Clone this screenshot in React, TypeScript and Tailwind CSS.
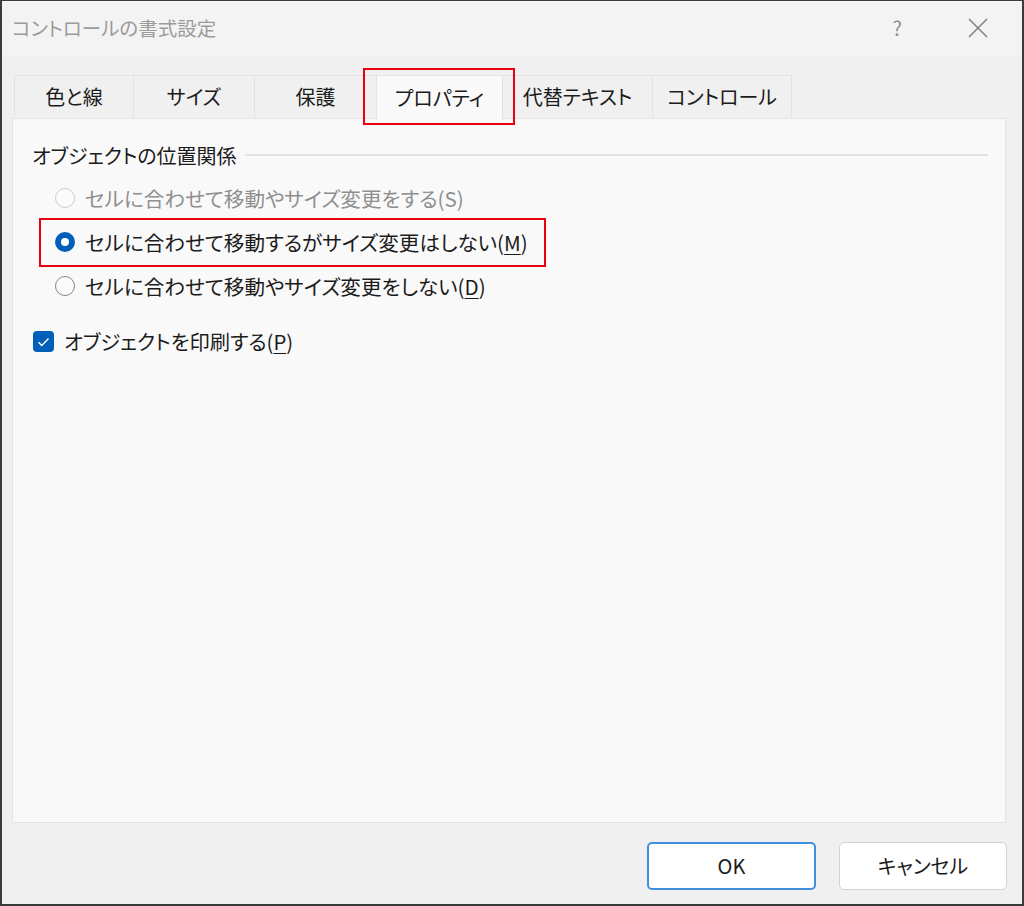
import React from "react";

const font = "font-['Noto_Sans_CJK_JP','Noto_Sans',sans-serif] [font-feature-settings:'palt']";

const tabs = ["色と線", "サイズ", "保護", "プロパティ", "代替テキスト", "コントロール"];
const tabWidths = ["w-[120px]", "w-[122px]", "w-[123px]", "w-[127px]", "w-[151px]", "w-[140px]"];

function Radio({ state }: { state: "disabled" | "checked" | "off" }) {
  if (state === "checked") {
    return (
      <span className="flex h-[20px] w-[20px] items-center justify-center rounded-full bg-[#005fb8]">
        <span className="h-[8px] w-[8px] rounded-full bg-white" />
      </span>
    );
  }
  return (
    <span
      className={
        "block h-[20px] w-[20px] rounded-full border bg-[#fbfbfb] " +
        (state === "disabled" ? "border-[#cdcdcd]" : "border-[#868686]")
      }
    />
  );
}

function Mn({ label, letter }: { label: string; letter: string }) {
  return (
    <>
      {label}(<span className="underline underline-offset-[3px] decoration-1">{letter}</span>)
    </>
  );
}

export default function App() {
  return (
    <div className={`${font} relative flex h-[906px] w-[1024px] flex-col border-x-2 border-b-2 border-t border-[#3b3b3b] bg-[#f0f0f0] text-[#1b1b1b]`}>
      {/* title bar */}
      <div className="flex h-[54px] items-center bg-[#f3f3f3] pl-[10px]">
        <span className="text-[19.5px] text-[#9b9b9b]">コントロールの書式設定</span>
        <span className="ml-auto mr-[66px] text-[20px] text-[#8e8e8e]">?</span>
        <svg width="20" height="20" viewBox="0 0 20 20" className="mr-[34px]">
          <path d="M1 1L19 19M19 1L1 19" stroke="#7a7a7a" strokeWidth="1.4" />
        </svg>
      </div>

      {/* tabs */}
      <div className="mt-[20px] flex pl-[12px]">
        {tabs.map((t, i) => (
          <div
            key={t}
            className={
              tabWidths[i] +
              " flex h-[43px] items-center justify-center border-x border-t border-[#e3e3e3] text-[20px] " +
              (i === 3 ? "relative z-10 -mb-px h-[44px] bg-[#f9f9f9]" : "bg-[#f0f0f0]") +
              (i > 0 ? " -ml-px" : "")
            }
          >
            {t}
          </div>
        ))}
      </div>

      {/* panel */}
      <div className="ml-[10px] mr-[16px] h-[705px] border border-[#e3e3e3] bg-[#f9f9f9] pl-[19px] pr-[17px] pt-[22px]">
        <div className="flex items-center">
          <span className="text-[20px]">オブジェクトの位置関係</span>
          <span className="ml-[8px] mt-[-3px] h-[2px] flex-1 bg-[#e2e2e2]" />
        </div>
        <div className="mt-[17px] flex flex-col gap-[24px] pl-[23px] text-[20.6px]">
          <div className="flex h-[20px] items-center gap-[10px] text-[#8f8f8f]">
            <Radio state="disabled" />
            <span>セルに合わせて移動やサイズ変更をする(S)</span>
          </div>
          <div className="flex h-[20px] items-center gap-[10px]">
            <Radio state="checked" />
            <span><Mn label="セルに合わせて移動するがサイズ変更はしない" letter="M" /></span>
          </div>
          <div className="flex h-[20px] items-center gap-[10px]">
            <Radio state="off" />
            <span><Mn label="セルに合わせて移動やサイズ変更をしない" letter="D" /></span>
          </div>
        </div>
        <div className="mt-[35px] flex h-[21px] items-center gap-[10px] pl-[1px] text-[20.3px]">
          <span className="flex h-[21px] w-[21px] items-center justify-center rounded-[4px] bg-[#005fb8]">
            <svg width="13" height="10" viewBox="0 0 13 10">
              <path d="M1.5 5.2L4.8 8.4L11.5 1.6" stroke="white" strokeWidth="1.4" fill="none" />
            </svg>
          </span>
          <span><Mn label="オブジェクトを印刷する" letter="P" /></span>
        </div>
      </div>

      {/* buttons */}
      <div className="mt-[19px] flex justify-end gap-[23px] pr-[15px]">
        <button className="h-[48px] w-[169px] rounded-[5px] border-2 border-[#3f8fde] bg-white text-[20px]">
          OK
        </button>
        <button className="h-[48px] w-[168px] rounded-[5px] border border-[#d2d2d2] bg-white text-[20px]">
          キャンセル
        </button>
      </div>

      {/* red annotations */}
      <div className="absolute left-[361px] top-[67px] h-[57px] w-[152px] border-2 border-[#e60012]" />
      <div className="absolute left-[37px] top-[217px] h-[49px] w-[507px] border-2 border-[#e60012]" />
    </div>
  );
}
